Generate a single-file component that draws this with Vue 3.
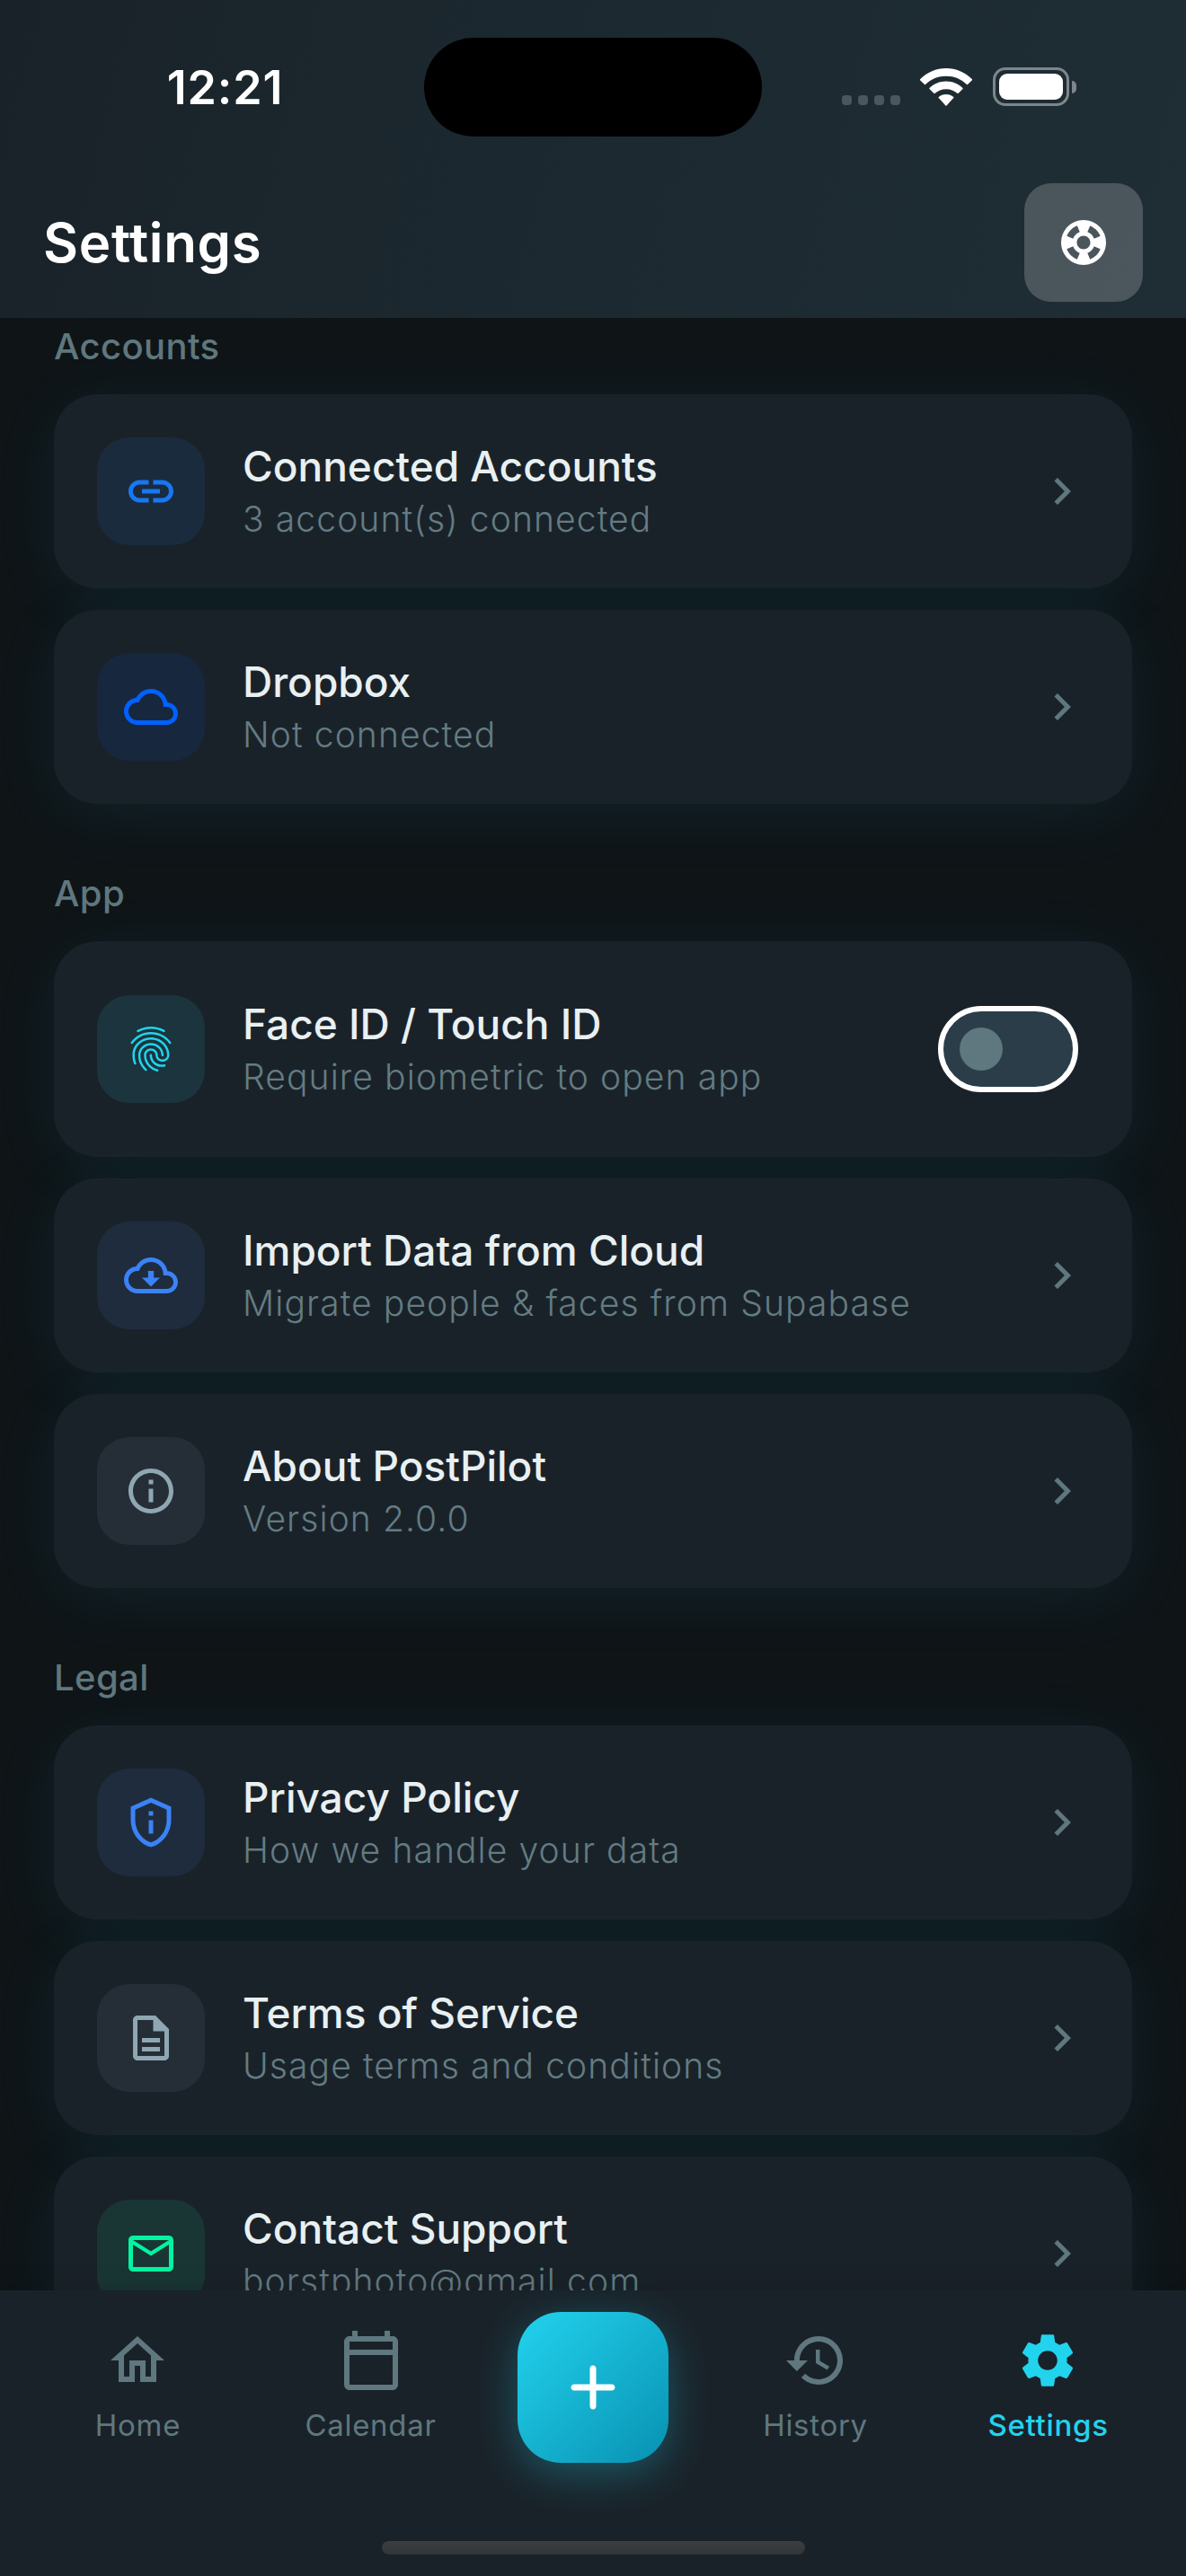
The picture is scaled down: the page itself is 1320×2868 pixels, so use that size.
<template>
  <div class="screen">
    <header class="header">
      <div class="status">
        <span class="clock">12:21</span>
        <div class="island"></div>
        <div class="indicators">
          <div class="cellular">
            <i v-for="n in 4" :key="n"></i>
          </div>
          <svg class="wifi" viewBox="0 0 58 42">
            <path d="M29 0C18 0 7.8 4.400 0 12.200Q-.4 12.700 0 13.200L5 18.100Q5.500 18.500 6 18.100C12.200 12 20.300 8.800 29 8.800S45.800 12 52 18.100Q52.500 18.500 53 18.100L58 13.200Q58.400 12.700 58 12.200C50.200 4.400 40 0 29 0Z" />
            <path d="M29 14.500C22 14.500 15.500 17.200 10.500 21.900Q10 22.400 10.500 22.900L15.500 27.900Q16 28.300 16.500 27.900C20 24.800 24.300 23.200 29 23.200S38 24.800 41.500 27.900Q42 28.300 42.500 27.900L47.500 22.900Q48 22.400 47.500 21.900C42.500 17.200 36 14.500 29 14.500Z" />
            <path d="M29 29C25.800 29 22.900 30.100 20.700 32Q20.200 32.500 20.700 33L28.400 41.500Q29 42 29.600 41.500L37.300 33Q37.800 32.500 37.300 32C35.100 30.100 32.200 29 29 29Z" />
          </svg>
          <div class="battery">
            <div class="battery-body"><div class="battery-level"></div></div>
            <div class="battery-tip"></div>
          </div>
        </div>
      </div>

      <div class="toolbar">
        <h1 class="page-title">Settings</h1>
        <button class="help-btn" aria-label="Support">
          <svg class="icon" viewBox="0 0 24 24"><path :d="icons.support" /></svg>
        </button>
      </div>
    </header>

    <main class="content">
      <section v-for="section in sections" :key="section.title" class="section">
        <h2 class="section-title">{{ section.title }}</h2>
        <div
          v-for="item in section.items"
          :key="item.title"
          class="card"
          :class="{ 'card--switch': item.toggle }"
        >
          <div class="tile" :class="`tile--${item.tone}`">
            <svg class="icon" viewBox="0 0 24 24"><path :d="icons[item.icon]" /></svg>
          </div>
          <div class="card-text">
            <div class="card-title">{{ item.title }}</div>
            <div class="card-sub">{{ item.sub }}</div>
          </div>
          <button
            v-if="item.toggle"
            class="switch"
            :class="{ 'switch--on': biometric }"
            aria-label="Toggle"
            @click="biometric = !biometric"
          >
            <span class="thumb"></span>
          </button>
          <svg v-else class="icon chevron" viewBox="0 0 24 24"><path :d="icons.chevron" /></svg>
        </div>
      </section>
    </main>

    <nav class="tabbar">
      <template v-for="tab in tabs" :key="tab.label">
        <button v-if="tab.fab" class="fab" :aria-label="tab.label">
          <svg viewBox="0 0 24 24"><path :d="icons.add" /></svg>
        </button>
        <a v-else class="tab" :class="{ 'tab--active': tab.active }">
          <svg viewBox="0 0 24 24"><path :d="icons[tab.icon]" /></svg>
          <span>{{ tab.label }}</span>
        </a>
      </template>
      <div class="home-indicator"></div>
    </nav>
  </div>
</template>

<script setup>
import { ref } from 'vue'

const biometric = ref(false)

const sections = [
  {
    title: 'Accounts',
    items: [
      { title: 'Connected Accounts', sub: '3 account(s) connected', icon: 'link', tone: 'link' },
      { title: 'Dropbox', sub: 'Not connected', icon: 'cloud', tone: 'dropbox' },
    ],
  },
  {
    title: 'App',
    items: [
      { title: 'Face ID / Touch ID', sub: 'Require biometric to open app', icon: 'fingerprint', tone: 'cyan', toggle: true },
      { title: 'Import Data from Cloud', sub: 'Migrate people & faces from Supabase', icon: 'download', tone: 'blue' },
      { title: 'About PostPilot', sub: 'Version 2.0.0', icon: 'info', tone: 'gray' },
    ],
  },
  {
    title: 'Legal',
    items: [
      { title: 'Privacy Policy', sub: 'How we handle your data', icon: 'privacy', tone: 'blue' },
      { title: 'Terms of Service', sub: 'Usage terms and conditions', icon: 'doc', tone: 'gray' },
      { title: 'Contact Support', sub: 'borstphoto@gmail.com', icon: 'mail', tone: 'green' },
    ],
  },
]

const tabs = [
  { label: 'Home', icon: 'home' },
  { label: 'Calendar', icon: 'calendar' },
  { label: 'Create', fab: true },
  { label: 'History', icon: 'history' },
  { label: 'Settings', icon: 'settings', active: true },
]

const icons = {
  support: 'M12 2C6.48 2 2 6.48 2 12c0 5.520 4.480 10 10 10s10-4.480 10-10C22 6.480 17.520 2 12 2zM19.460 9.120l-2.780 1.150c-.51-1.360-1.580-2.440-2.950-2.940l1.150-2.780C16.980 5.350 18.650 7.020 19.460 9.120zM12 15c-1.660 0-3-1.340-3-3s1.340-3 3-3 3 1.340 3 3S13.660 15 12 15zM9.130 4.540l1.170 2.780c-1.380.5-2.470 1.590-2.980 2.970L4.540 9.130C5.350 7.020 7.020 5.350 9.130 4.540zM4.540 14.870l2.780-1.150c.51 1.380 1.590 2.460 2.970 2.960l-1.170 2.780C7.020 18.650 5.350 16.980 4.540 14.870zM14.880 19.460l-1.150-2.780c1.370-.51 2.450-1.590 2.950-2.970l2.780 1.170C18.650 16.980 16.980 18.650 14.880 19.460z',
  link: 'M17 7h-4v2h4c1.650 0 3 1.350 3 3s-1.350 3-3 3h-4v2h4c2.760 0 5-2.240 5-5s-2.240-5-5-5zm-6 8H7c-1.650 0-3-1.350-3-3s1.350-3 3-3h4V7H7c-2.760 0-5 2.240-5 5s2.240 5 5 5h4v-2zm-3-4h8v2H8z',
  cloud: 'M19.350 10.040C18.670 6.590 15.640 4 12 4 9.110 4 6.610 5.640 5.360 8.040 2.340 8.360 0 10.910 0 14c0 3.310 2.690 6 6 6h13c2.760 0 5-2.240 5-5 0-2.640-2.050-4.780-4.650-4.960zM19 18H6c-2.210 0-4-1.790-4-4s1.790-4 4-4h.71C7.370 7.690 9.480 6 12 6c3.040 0 5.500 2.460 5.500 5.500v.5H19c1.660 0 3 1.340 3 3s-1.340 3-3 3z',
  fingerprint: 'M17.810 4.470c-.08 0-.16-.02-.23-.06C15.660 3.420 14 3 12.010 3c-1.980 0-3.860.47-5.570 1.410-.24.13-.54.04-.68-.2-.13-.24-.04-.55.2-.68C7.820 2.520 9.860 2 12.010 2c2.130 0 3.990.47 6.030 1.520.25.13.34.43.21.67-.09.18-.26.28-.44.28zM3.500 9.720c-.1 0-.2-.03-.29-.09-.23-.16-.28-.47-.12-.7.99-1.400 2.250-2.500 3.750-3.270C9.980 4.040 14 4.030 17.150 5.650c1.500.77 2.760 1.860 3.750 3.250.16.22.11.54-.12.7-.23.16-.54.11-.7-.12-.9-1.260-2.040-2.250-3.390-2.940-2.870-1.470-6.540-1.470-9.400.01-1.360.7-2.500 1.700-3.400 2.960-.08.14-.23.21-.39.21zm6.250 12.070c-.13 0-.26-.05-.35-.15-.87-.87-1.340-1.430-2.010-2.640-.69-1.230-1.050-2.730-1.050-4.340 0-2.970 2.540-5.390 5.660-5.390s5.660 2.420 5.660 5.390c0 .28-.22.5-.5.5s-.5-.22-.5-.5c0-2.420-2.090-4.390-4.660-4.390-2.570 0-4.660 1.970-4.660 4.390 0 1.440.32 2.770.93 3.850.64 1.150 1.080 1.640 1.850 2.420.19.2.19.51 0 .71-.11.1-.24.15-.37.15zm7.170-1.850c-1.190 0-2.240-.3-3.100-.89-1.490-1.010-2.380-2.650-2.380-4.390 0-.28.22-.5.5-.5s.5.22.5.5c0 1.410.72 2.740 1.940 3.560.71.48 1.540.71 2.540.71.24 0 .64-.03 1.040-.1.27-.05.53.13.58.41.05.27-.13.53-.41.58-.57.11-1.070.12-1.210.12zM14.910 22c-.04 0-.09-.01-.13-.02-1.590-.44-2.630-1.030-3.720-2.100-1.400-1.390-2.170-3.240-2.170-5.220 0-1.620 1.380-2.940 3.080-2.940 1.700 0 3.080 1.320 3.080 2.940 0 1.070.93 1.940 2.080 1.940s2.080-.87 2.080-1.940c0-3.770-3.250-6.830-7.250-6.830-2.840 0-5.440 1.580-6.610 4.030-.39.81-.59 1.760-.59 2.800 0 .78.07 2.010.67 3.610.1.26-.03.55-.29.64-.26.1-.55-.04-.64-.29-.49-1.310-.73-2.610-.73-3.960 0-1.200.23-2.290.68-3.240 1.330-2.790 4.280-4.600 7.510-4.600 4.550 0 8.250 3.510 8.250 7.830 0 1.620-1.380 2.940-3.080 2.940s-3.080-1.320-3.080-2.940c0-1.070-.93-1.940-2.080-1.940s-2.080.87-2.080 1.940c0 1.710.66 3.310 1.870 4.510.95.94 1.860 1.460 3.270 1.850.27.07.42.35.35.61-.05.23-.26.38-.47.38z',
  download: 'M19.350 10.040C18.670 6.590 15.640 4 12 4 9.110 4 6.610 5.640 5.360 8.040 2.340 8.360 0 10.910 0 14c0 3.310 2.690 6 6 6h13c2.760 0 5-2.240 5-5 0-2.640-2.050-4.780-4.650-4.960zM19 18H6c-2.210 0-4-1.790-4-4s1.790-4 4-4h.71C7.370 7.690 9.480 6 12 6c3.040 0 5.500 2.460 5.500 5.500v.5H19c1.660 0 3 1.340 3 3s-1.340 3-3 3zM13.270 10h-2.540v3H8l4 4 4-4h-2.730z',
  info: 'M11 7h2v2h-2zm0 4h2v6h-2zm1-9C6.480 2 2 6.480 2 12s4.480 10 10 10 10-4.480 10-10S17.520 2 12 2zm0 18c-4.410 0-8-3.590-8-8s3.590-8 8-8 8 3.590 8 8-3.590 8-8 8z',
  privacy: 'M12 1L3 5v6c0 5.550 3.840 10.740 9 12 5.160-1.260 9-6.450 9-12V5l-9-4zm7 10c0 4.520-2.980 8.690-7 9.930-4.020-1.240-7-5.410-7-9.930V6.300l7-3.110 7 3.110V11zm-8 0h2v6h-2v-6zm0-4h2v2h-2V7z',
  doc: 'M8 16h8v2H8zm0-4h8v2H8zm6-10H6c-1.100 0-2 .9-2 2v16c0 1.100.89 2 1.990 2H18c1.100 0 2-.9 2-2V8l-6-6zm4 18H6V4h7v5h5v11z',
  mail: 'M20 4H4c-1.100 0-2 .9-2 2v12c0 1.100.9 2 2 2h16c1.100 0 2-.9 2-2V6c0-1.100-.9-2-2-2zm0 14H4V8l8 5 8-5v10zm-8-7L4 6h16l-8 5z',
  chevron: 'M10 6L8.590 7.410 13.170 12l-4.580 4.590L10 18l6-6z',
  home: 'M12 5.690l5 4.500V18h-2v-6H9v6H7v-7.810l5-4.500M12 3L2 12h3v8h6v-6h2v6h6v-8h3L12 3z',
  calendar: 'M20 3h-1V1h-2v2H7V1H5v2H4c-1.100 0-2 .9-2 2v16c0 1.100.9 2 2 2h16c1.100 0 2-.9 2-2V5c0-1.100-.9-2-2-2zm0 18H4V10h16v11zm0-13H4V5h16v3z',
  history: 'M13 3c-4.970 0-9 4.030-9 9H1l3.890 3.890.07.14L9 12H6c0-3.870 3.130-7 7-7s7 3.130 7 7-3.130 7-7 7c-1.930 0-3.680-.79-4.940-2.060l-1.420 1.420C8.270 19.990 10.510 21 13 21c4.970 0 9-4.030 9-9s-4.030-9-9-9zm-1 5v5l4.250 2.520.77-1.280-3.520-2.090V8z',
  settings: 'M19.140 12.940c.04-.3.06-.61.06-.94 0-.32-.02-.64-.07-.94l2.030-1.580c.18-.14.23-.41.12-.61l-1.920-3.320c-.12-.22-.37-.29-.59-.22l-2.390.96c-.5-.38-1.030-.7-1.620-.94L14.400 2.810c-.04-.24-.24-.41-.48-.41h-3.840c-.24 0-.43.17-.47.41L9.250 5.350C8.660 5.590 8.120 5.920 7.630 6.290L5.240 5.330c-.22-.08-.47 0-.59.22L2.740 8.870c-.12.21-.08.47.12.61l2.030 1.580C4.840 11.360 4.800 11.690 4.800 12s.02.64.07.94l-2.030 1.580c-.18.14-.23.41-.12.61l1.920 3.320c.12.22.37.29.59.22l2.390-.96c.5.38 1.030.7 1.620.94l.36 2.540c.05.24.24.41.48.41h3.840c.24 0 .44-.17.47-.41l.36-2.540c.59-.24 1.130-.56 1.620-.94l2.390.96c.22.08.47 0 .59-.22l1.920-3.320c.12-.22.07-.47-.12-.61L19.140 12.940zM12 15.600c-1.980 0-3.600-1.620-3.600-3.600s1.620-3.600 3.600-3.600 3.600 1.620 3.600 3.600S13.980 15.600 12 15.600z',
  add: 'M18 13h-5v5c0 .55-.45 1-1 1s-1-.45-1-1v-5H6c-.55 0-1-.45-1-1s.45-1 1-1h5V6c0-.55.45-1 1-1s1 .45 1 1v5h5c.55 0 1 .45 1 1s-.45 1-1 1z',
}
</script>

<style>
body {
  margin: 0;
  background: #0f1417;
}
</style>

<style scoped>
.screen {
  display: flex;
  flex-direction: column;
  width: 1320px;
  height: 2868px;
  overflow: hidden;
  background: #0f1417;
  font-family: Inter, 'Liberation Sans', sans-serif;
}

button {
  border: 0;
  padding: 0;
  font: inherit;
}

svg {
  display: block;
  fill: currentColor;
}

.icon {
  width: 60px;
  height: 60px;
}

/* ── Header ── */
.header {
  flex: none;
  height: 354px;
  background: linear-gradient(105deg, #1a2229 0%, #1c2930 50%, #1f2d35 100%);
  color: #fff;
}

.status {
  display: grid;
  grid-template-columns: 472px 376px 472px;
  align-items: center;
  height: 110px;
  padding-top: 42px;
}

.clock {
  padding-left: 29px;
  text-align: center;
  font-size: 52px;
  font-weight: 600;
  letter-spacing: 0.8px;
}

.island {
  height: 110px;
  border-radius: 55px;
  background: #000;
}

.indicators {
  display: flex;
  align-items: center;
  height: 43px;
  margin-top: -1px;
  padding-left: 89px;
}

.cellular {
  display: flex;
  align-self: flex-end;
  gap: 7px;
  margin-right: 22px;
  padding-bottom: 1px;
}
.cellular i {
  width: 11px;
  height: 11px;
  border-radius: 4px;
  background: #4b575e;
}

.wifi {
  width: 58px;
  height: 42px;
  margin-right: 23px;
}

.battery {
  display: flex;
  align-items: center;
  gap: 3px;
}
.battery-body {
  box-sizing: border-box;
  width: 85px;
  height: 43px;
  padding: 4px;
  border: 3px solid #7d868b;
  border-radius: 14px;
}
.battery-level {
  height: 29px;
  border-radius: 9px;
  background: #fff;
}
.battery-tip {
  width: 5px;
  height: 14px;
  border-radius: 0 5px 5px 0;
  background: #7d868b;
}

.toolbar {
  display: flex;
  align-items: center;
  justify-content: space-between;
  height: 132px;
  margin-top: 52px;
  padding: 0 48px;
}

.page-title {
  margin: 0;
  font-size: 60px;
  font-weight: 600;
  letter-spacing: 0.7px;
}

.help-btn {
  display: grid;
  place-items: center;
  width: 132px;
  height: 132px;
  border-radius: 30px;
  background: rgba(255, 255, 255, 0.2);
  color: #fff;
}

/* ── List ── */
.content {
  flex: 1;
  min-height: 0;
  overflow: hidden;
  padding: 0 60px;
}

.section {
  display: flex;
  flex-direction: column;
  gap: 24px;
}
.section + .section {
  margin-top: 72px;
}

.section-title {
  margin: 0;
  height: 57px;
  line-height: 56px;
  font-size: 40px;
  font-weight: 500;
  letter-spacing: 0.4px;
  color: #5f777e;
}
.section:first-child .section-title {
  margin-top: 4px;
}

.card {
  display: flex;
  align-items: center;
  box-sizing: border-box;
  height: 216px;
  padding: 48px;
  border-radius: 48px;
  background: #1a2229;
  box-shadow: 0 12px 72px rgba(34, 200, 238, 0.08);
}
.card--switch {
  height: 240px;
}

.tile {
  display: grid;
  place-items: center;
  width: 120px;
  height: 120px;
  border-radius: 36px;
}
.tile--link    { background: #1a2b3d; color: #1877f2; }
.tile--dropbox { background: #17273e; color: #0061ff; }
.tile--cyan    { background: #1b343d; color: #22d3ee; }
.tile--blue    { background: #1e2c3d; color: #3b82f6; }
.tile--gray    { background: #252e37; color: #8fa7b3; }
.tile--green   { background: #193635; color: #00f5a0; }

.card-text {
  flex: 1;
  padding-left: 42px;
}

.card-title {
  line-height: 62px;
  font-size: 46px;
  font-weight: 500;
  color: #e8f0f2;
}

.card-sub {
  line-height: 56px;
  font-size: 39px;
  font-weight: 300;
  letter-spacing: 1.1px;
  color: #637c83;
}

.chevron {
  color: #5f777e;
}

.switch {
  box-sizing: border-box;
  width: 156px;
  height: 96px;
  margin-right: 12px;
  padding-left: 18px;
  border: 6px solid #fff;
  border-radius: 48px;
  background: #2a3d49;
}
.thumb {
  display: block;
  width: 48px;
  height: 48px;
  border-radius: 50%;
  background: #5f777e;
}
.switch--on .thumb {
  margin-left: 60px;
}

/* ── Tab bar ── */
.tabbar {
  position: relative;
  flex: none;
  display: grid;
  grid-template-columns: 259px 259px 236px 259px 259px;
  align-items: start;
  justify-items: center;
  height: 318px;
  box-sizing: border-box;
  padding: 24px 24px 0;
  background: #1a2229;
  box-shadow: 0 -6px 24px rgba(0, 0, 0, 0.12);
}

.tab {
  display: flex;
  flex-direction: column;
  align-items: center;
  padding-top: 18px;
  color: #5f777e;
  font-size: 33px;
  line-height: 48px;
  letter-spacing: 0.7px;
}
.tab svg {
  width: 72px;
  height: 72px;
  margin-bottom: 12px;
}
.tab--active {
  color: #22d3ee;
  font-weight: 500;
}

.fab {
  display: grid;
  place-items: center;
  width: 168px;
  height: 168px;
  border-radius: 48px;
  background: linear-gradient(135deg, #22d3ee, #0891b2);
  box-shadow: 0 12px 48px rgba(34, 211, 238, 0.3);
  color: #fff;
}
.fab svg {
  width: 84px;
  height: 84px;
}

/* floats over the bar like the system one */
.home-indicator {
  position: absolute;
  left: 425px;
  bottom: 24px;
  width: 471px;
  height: 15px;
  border-radius: 8px;
  background: linear-gradient(#3b3d3f, #333638);
}
</style>
